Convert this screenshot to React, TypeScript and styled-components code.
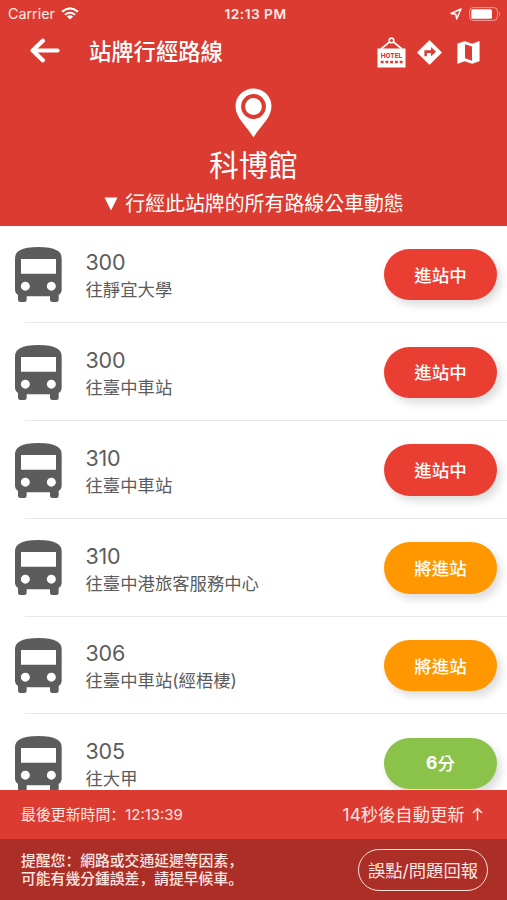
import React from 'react';
import styled, { createGlobalStyle } from 'styled-components';

const GlobalStyle = createGlobalStyle`
  * { box-sizing: border-box; }
  html, body { margin: 0; padding: 0; background: #fff; }
  body { font-family: Inter, "Noto Sans CJK TC", sans-serif; overflow: hidden; }
  button { font: inherit; padding: 0; border: 0; background: none; color: inherit; }
  svg { display: block; flex: none; }
`;

const Screen = styled.div`
  width: 507px;
  height: 900px;
  display: flex;
  flex-direction: column;
  overflow: hidden;
  background: #fff;
`;

const Header = styled.header`
  height: 225.5px;
  flex: none;
  background: #db3b30;
  color: #fff;
  display: flex;
  flex-direction: column;
`;

const StatusBar = styled.div`
  height: 27px;
  flex: none;
  display: grid;
  grid-template-columns: 1fr auto 1fr;
  align-items: center;
  padding: 0 6px 0 8px;
  font-size: 14.3px;
  color: #ffe9e6;
`;

const Carrier = styled.div`
  display: flex;
  align-items: center;
  gap: 6px;
`;

const Clock = styled.div`
  font-size: 13.7px;
  font-weight: 600;
  letter-spacing: 0.5px;
  padding-left: 2px;
`;

const Indicators = styled.div`
  display: flex;
  justify-content: flex-end;
  align-items: center;
  gap: 7px;
`;

const NavBar = styled.div`
  height: 50px;
  flex: none;
  display: flex;
  align-items: center;
  padding: 0 27px 0 30px;
`;

const BackButton = styled.button`
  padding-bottom: 3px;
`;

const Title = styled.h1`
  margin: 0 0 0 29px;
  font-size: 22.3px;
  line-height: 30px;
  font-weight: 500;
  flex: 1;
`;

const Actions = styled.div`
  display: flex;
  align-items: center;
  gap: 12px;

  svg:first-child { margin-right: -1px; }
  svg:last-child { margin-left: 3px; }
`;

const Hero = styled.div`
  display: flex;
  flex-direction: column;
  align-items: center;
  padding-top: 11px;
`;

const StopName = styled.h2`
  margin: 7px 0 0;
  font-size: 29.5px;
  line-height: 40px;
  font-weight: 400;
`;

const Subtitle = styled.div`
  display: flex;
  align-items: center;
  gap: 7px;
  margin-top: 5px;
  padding-left: 1px;
  font-size: 19.9px;
  line-height: 28px;
`;

const List = styled.main`
  flex: 1;
  min-height: 0;
  overflow: hidden;
`;

const Row = styled.div`
  height: 97.75px;
  display: flex;
  padding: 0 10px 0 15px;
  background: linear-gradient(#e8e8e8, #e8e8e8) 25px 100% / 100% 1px no-repeat;
`;

const BusCell = styled.div`
  width: 70.5px;
  padding-top: 21.5px;
`;

const RouteInfo = styled.div`
  flex: 1;
  padding-top: 21.8px;
  color: #5c5c5c;
`;

const RouteNumber = styled.div`
  font-size: 21.5px;
  line-height: 31px;
  letter-spacing: -0.2px;
`;

const Destination = styled.div`
  font-size: 17.35px;
  line-height: 24px;
`;

const Status = styled.div<{ $color: string }>`
  width: 113px;
  height: 51.5px;
  margin-top: 23.3px;
  padding-bottom: 1px;
  border-radius: 26px;
  display: flex;
  align-items: center;
  justify-content: center;
  background: ${(p) => p.$color};
  color: #fff;
  font-size: 17.5px;
  font-weight: 500;
  box-shadow: 4px 5px 9px rgba(0, 0, 0, 0.14);
`;

const Minutes = styled.span`
  font-weight: 700;
`;

const UpdateBar = styled.div`
  height: 49px;
  flex: none;
  display: flex;
  align-items: center;
  justify-content: space-between;
  padding: 0 24px 2px 21px;
  background: #db3b30;
  color: #ffe6e2;
`;

const LastUpdate = styled.div`
  font-size: 14.9px;
`;

const Countdown = styled.div`
  display: flex;
  align-items: center;
  gap: 7.5px;
  font-size: 17.3px;
`;

const NoticeBar = styled.footer`
  height: 61px;
  flex: none;
  display: flex;
  align-items: center;
  justify-content: space-between;
  padding: 0 19px 0 21px;
  background: #ac2f27;
  color: #ffe6e2;
`;

const Notice = styled.div`
  font-size: 14.8px;
  font-weight: 500;
  white-space: nowrap;
`;

const NoticeLine = styled.div`
  height: 18px;
  line-height: 18px;
`;

const Mark = styled.span`
  font-family: Inter, "Noto Sans CJK SC", sans-serif;
`;

const ReportButton = styled.button`
  width: 130px;
  height: 42px;
  border: 1.5px solid #ffe0dc;
  border-radius: 21px;
  font-size: 17.3px;
  white-space: nowrap;
`;

const WifiIcon = () => (
  <svg width="18" height="13" viewBox="0 0 18 13" fill="none" stroke="#fff" strokeWidth="2.1">
    <path d="M1 4.7Q9-2 17 4.7M3.9 7.8Q9 3.7 14.1 7.8" />
    <path d="M5.9 9.4Q9 7.1 12.1 9.4L9 12.6Z" fill="#fff" stroke="none" />
  </svg>
);

const LocationIcon = () => (
  <svg width="12" height="12" viewBox="0 0 12 12" fill="none" stroke="#fff" strokeWidth="1.4" strokeLinejoin="round">
    <path d="M11 1L1 5.5L5.8 6.2L6.7 11Z" />
  </svg>
);

const BatteryIcon = () => (
  <svg width="32" height="14" viewBox="0 0 32 14">
    <rect x=".6" y=".6" width="27.8" height="12.8" rx="3.5" fill="none" stroke="#f3a19a" strokeWidth="1" />
    <rect x="2.3" y="2.3" width="20.7" height="9.4" rx="1.5" fill="#fff" />
    <path d="M30 4.6Q32.2 7 30 9.4Z" fill="#f3a19a" />
  </svg>
);

const BackIcon = () => (
  <svg width="30" height="25" viewBox="0 0 30 25" fill="none" stroke="#fff" strokeWidth="4.3" strokeLinecap="round" strokeLinejoin="round">
    <path d="M12.8 2.7L2.7 12.5L12.8 22.3" />
    <path d="M3.5 12.5H27.6" strokeWidth="4" />
  </svg>
);

const HotelIcon = () => (
  <svg width="29" height="31" viewBox="0 0 29 31">
    <path d="M4 12L13 4.7M25 12L16 4.7" stroke="#fff" strokeWidth="1.7" />
    <circle cx="14.5" cy="3.4" r="2.3" fill="none" stroke="#fff" strokeWidth="1.6" />
    <rect x=".5" y="11.5" width="28" height="19" fill="#fff" />
    <text x="14.5" y="20.6" textAnchor="middle" textLength="21.5" lengthAdjust="spacingAndGlyphs" fontFamily="Inter" fontWeight="800" fontSize="6.5" fill="#db3b30">HOTEL</text>
    <path d="M3.7 25H25.6" stroke="#db3b30" strokeWidth="2.7" strokeDasharray="2.9 1.85" />
  </svg>
);

const DirectionsIcon = () => (
  <svg width="25" height="25" viewBox="0 0 25 25">
    <path d="M12.5 1.4L23.6 12.5L12.5 23.6L1.4 12.5Z" fill="#fff" stroke="#fff" strokeWidth="2" strokeLinejoin="round" />
    <path d="M7.4 16.3V10.3H14V7.1L19 11.7L14 16.2V13H9.9V16.3Z" fill="#db3b30" />
  </svg>
);

const MapIcon = () => (
  <svg width="23" height="23" viewBox="0 0 23 23">
    <path d="M.7 2.8L7.7.4L15.2 3L22.3.4V20L15.2 22.5L7.7 20L.7 22.5Z" fill="#fff" stroke="#fff" strokeWidth=".5" strokeLinejoin="round" />
    <path d="M8 3.2L15 5.6V19.7L8 17.3Z" fill="#db3b30" />
  </svg>
);

const PinIcon = () => (
  <svg width="37" height="50" viewBox="0 0 37 50">
    <path d="M18.5.5C8.5.5.5 8.4.5 18.3C.5 29.8 11.5 38 18.5 49.5C25.5 38 36.5 29.8 36.5 18.3C36.5 8.4 28.5.5 18.5.5Z" fill="#fff" />
    <circle cx="18.5" cy="18.5" r="10.4" fill="none" stroke="#db3b30" strokeWidth="4" />
  </svg>
);

const TriangleIcon = () => (
  <svg width="14" height="14" viewBox="0 0 14 14">
    <path d="M.5.5H13.5L7 13.5Z" fill="#fff" />
  </svg>
);

const BusIcon = () => (
  <svg width="46.7" height="56" viewBox="0 0 140 168" fill="#5c5c5c">
    <path
      fillRule="evenodd"
      d="M0 35Q0 17 15 10Q33 0 70 0T125 10Q140 17 140 35V130Q140 138 131 144V158Q131 165 124 165H112Q105 165 105 158V148H35V158Q35 165 28 165H16Q9 165 9 158V144Q0 138 0 130ZM18 36V80H123V36ZM31 104A13.5 13.5 0 1 0 31 131A13.5 13.5 0 1 0 31 104ZM109 104A13.5 13.5 0 1 0 109 131A13.5 13.5 0 1 0 109 104Z"
    />
  </svg>
);

const UpArrowIcon = () => (
  <svg width="11" height="14" viewBox="0 0 11 14" fill="none" stroke="#ffe6e2" strokeWidth="1.5">
    <path d="M5.5 13.5V1.5M1 6L5.5 1.5L10 6" />
  </svg>
);

const RED = '#e93e31';
const ORANGE = '#ff9800';
const GREEN = '#8bc34a';

const buses = [
  { route: '300', destination: '往靜宜大學', status: '進站中', color: RED },
  { route: '300', destination: '往臺中車站', status: '進站中', color: RED },
  { route: '310', destination: '往臺中車站', status: '進站中', color: RED },
  { route: '310', destination: '往臺中港旅客服務中心', status: '將進站', color: ORANGE },
  { route: '306', destination: '往臺中車站(經梧棲)', status: '將進站', color: ORANGE },
  { route: '305', destination: '往大甲', minutes: 6, status: '分', color: GREEN },
];

export default function App() {
  return (
    <>
      <GlobalStyle />
      <Screen lang="zh-Hant">
        <Header>
          <StatusBar>
            <Carrier>Carrier<WifiIcon /></Carrier>
            <Clock>12:13 PM</Clock>
            <Indicators><LocationIcon /><BatteryIcon /></Indicators>
          </StatusBar>
          <NavBar>
            <BackButton aria-label="返回"><BackIcon /></BackButton>
            <Title>站牌行經路線</Title>
            <Actions>
              <HotelIcon />
              <DirectionsIcon />
              <MapIcon />
            </Actions>
          </NavBar>
          <Hero>
            <PinIcon />
            <StopName>科博館</StopName>
            <Subtitle><TriangleIcon />行經此站牌的所有路線公車動態</Subtitle>
          </Hero>
        </Header>
        <List>
          {buses.map((bus, i) => (
            <Row key={i}>
              <BusCell><BusIcon /></BusCell>
              <RouteInfo>
                <RouteNumber>{bus.route}</RouteNumber>
                <Destination>{bus.destination}</Destination>
              </RouteInfo>
              <Status $color={bus.color}>
                {bus.minutes && <Minutes>{bus.minutes}</Minutes>}
                {bus.status}
              </Status>
            </Row>
          ))}
        </List>
        <UpdateBar>
          <LastUpdate>最後更新時間<Mark lang="zh-Hans">：</Mark>12:13:39</LastUpdate>
          <Countdown>14秒後自動更新<UpArrowIcon /></Countdown>
        </UpdateBar>
        <NoticeBar>
          <Notice>
            <NoticeLine>
              提醒您<Mark lang="zh-Hans">：</Mark>網路或交通延遲等因素<Mark lang="zh-Hans">，</Mark>
            </NoticeLine>
            <NoticeLine>
              可能有幾分鍾誤差<Mark lang="zh-Hans">，</Mark>請提早候車<Mark lang="zh-Hans">。</Mark>
            </NoticeLine>
          </Notice>
          <ReportButton>誤點/問題回報</ReportButton>
        </NoticeBar>
      </Screen>
    </>
  );
}
